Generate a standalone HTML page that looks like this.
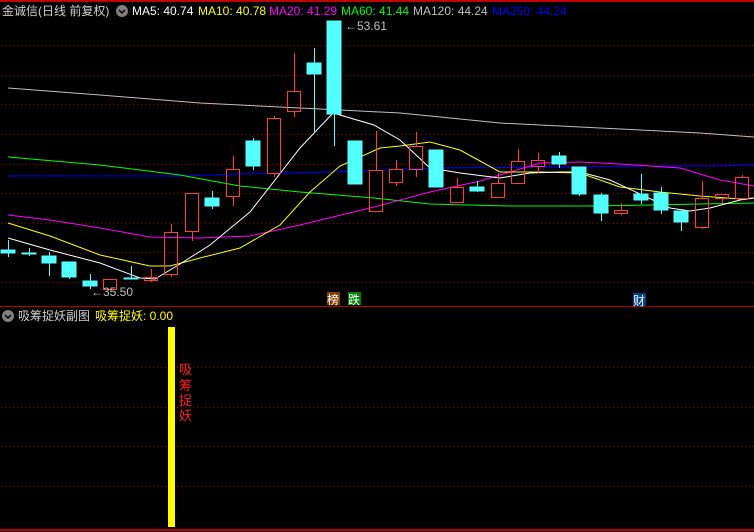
<!DOCTYPE html>
<html><head><meta charset="utf-8"><style>
html,body{margin:0;padding:0;background:#000;width:754px;height:532px;overflow:hidden}
svg{display:block}
text{font-family:"Liberation Sans","Noto Sans CJK SC",sans-serif}
</style></head><body>
<svg width="754" height="532" viewBox="0 0 754 532" xmlns="http://www.w3.org/2000/svg">
<rect width="754" height="532" fill="#000"/>
<rect x="0" y="0" width="754" height="2" fill="#c00000"/>
<g stroke="#a00000" stroke-width="1" stroke-dasharray="1 3">
<line x1="1" y1="45.5" x2="754" y2="45.5"/><line x1="1" y1="75.5" x2="754" y2="75.5"/>
<line x1="1" y1="104.5" x2="754" y2="104.5"/><line x1="1" y1="134.5" x2="754" y2="134.5"/>
<line x1="1" y1="164.5" x2="754" y2="164.5"/><line x1="1" y1="193.5" x2="754" y2="193.5"/>
<line x1="1" y1="223.5" x2="754" y2="223.5"/><line x1="1" y1="252.5" x2="754" y2="252.5"/>
<line x1="1" y1="282.5" x2="754" y2="282.5"/>
<line x1="1" y1="367.5" x2="754" y2="367.5"/><line x1="1" y1="407.5" x2="754" y2="407.5"/>
<line x1="1" y1="446.5" x2="754" y2="446.5"/><line x1="1" y1="486.5" x2="754" y2="486.5"/>
</g>
<rect x="0" y="306" width="754" height="1" fill="#b00000"/>
<rect x="0" y="529" width="754" height="2" fill="#c00000"/>
<g fill="none" stroke-width="1">
<polyline stroke="#c0c0c0" points="8,88 100,95 200,103 300,108 400,113 500,123 600,128 700,133 754,137"/>
<polyline stroke="#0000ff" points="8,176 180,176 240,174 330,172 440,168 560,167 650,166 710,166 754,165"/>
<polyline stroke="#00ff00" points="8,157 100,165 180,175 240,186 300,192 374,198 430,204 510,206 590,206 650,205 700,204 754,203"/>
<polyline stroke="#ff00ff" points="8,215 50,220 100,228 150,237 200,238 250,236 300,225 374,207 430,192 480,181 540,163 580,162 620,164 680,168 720,180 754,186"/>
<polyline stroke="#ffff00" points="8,223 50,236 100,255 150,266 170,266 200,258 240,248 280,225 310,192 340,166 380,148 400,146 430,142 460,150 500,172 540,172 580,173 620,187 660,192 700,196 740,199 754,198"/>
<polyline stroke="#ffffff" points="8,238 50,250 100,263 140,278 155,279 180,264 210,245 250,212 300,148 333,113 374,125 400,140 430,168 460,173 500,178 530,173 560,172 580,172 610,180 640,194 670,208 690,211 710,208 740,200 754,198"/>
</g>
<g stroke="#54ffff" fill="#54ffff">
<line x1="8.5" y1="240" x2="8.5" y2="257"/><rect x="1" y="250" width="14" height="3"/>
<line x1="29.5" y1="248" x2="29.5" y2="256"/><rect x="22" y="253" width="14" height="1"/>
<line x1="49.5" y1="252" x2="49.5" y2="276"/><rect x="42" y="256" width="14" height="7"/>
<line x1="69.5" y1="262" x2="69.5" y2="279"/><rect x="62" y="262" width="14" height="15"/>
<line x1="90.5" y1="274" x2="90.5" y2="289"/><rect x="83" y="281" width="14" height="5"/>
<line x1="131.5" y1="266" x2="131.5" y2="279"/><rect x="124" y="278" width="14" height="1"/>
<line x1="212.5" y1="191" x2="212.5" y2="209"/><rect x="205" y="198" width="14" height="8"/>
<line x1="253.5" y1="138" x2="253.5" y2="170"/><rect x="246" y="141" width="14" height="25"/>
<line x1="314.5" y1="48" x2="314.5" y2="133"/><rect x="307" y="63" width="14" height="11"/>
<line x1="334.5" y1="21" x2="334.5" y2="146"/><rect x="327" y="21" width="14" height="93"/>
<rect x="348" y="141" width="14" height="43"/>
<rect x="429" y="150" width="14" height="37"/>
<line x1="477.5" y1="181" x2="477.5" y2="192"/><rect x="470" y="187" width="14" height="4"/>
<line x1="559.5" y1="152" x2="559.5" y2="168"/><rect x="552" y="156" width="14" height="8"/>
<line x1="579.5" y1="167" x2="579.5" y2="196"/><rect x="572" y="167" width="14" height="27"/>
<line x1="601.5" y1="193" x2="601.5" y2="221"/><rect x="594" y="195" width="14" height="18"/>
<line x1="641.5" y1="174" x2="641.5" y2="204"/><rect x="634" y="194" width="14" height="6"/>
<line x1="661.5" y1="187" x2="661.5" y2="214"/><rect x="654" y="193" width="14" height="17"/>
<line x1="681.5" y1="211" x2="681.5" y2="231"/><rect x="674" y="211" width="14" height="11"/>
</g>
<g stroke="#ff3c3c" fill="none" stroke-width="1">
<rect x="103.5" y="279.5" width="13" height="10"/>
<path d="M151.5 269V277.5M151.5 280V282"/><rect x="144.5" y="277.5" width="13" height="3"/>
<path d="M171.5 224V232M171.5 274V277"/><rect x="164.5" y="232.5" width="13" height="42"/>
<path d="M192.5 231V241"/><rect x="185.5" y="193.5" width="13" height="38"/>
<path d="M233.5 156V169M233.5 196V206"/><rect x="226.5" y="169.5" width="13" height="27"/>
<path d="M274.5 116V118M274.5 173V177"/><rect x="267.5" y="118.5" width="13" height="55"/>
<path d="M294.5 53V91M294.5 111V117"/><rect x="287.5" y="91.5" width="13" height="20"/>
<path d="M376.5 131V170"/><rect x="369.5" y="170.5" width="13" height="41"/>
<path d="M396.5 160V169M396.5 182V186"/><rect x="389.5" y="169.5" width="13" height="13"/>
<path d="M416.5 132V146M416.5 169V177"/><rect x="409.5" y="146.5" width="13" height="23"/>
<path d="M457.5 178V187"/><rect x="450.5" y="187.5" width="13" height="15"/>
<path d="M498.5 173V183"/><rect x="491.5" y="183.5" width="13" height="14"/>
<path d="M518.5 149V161"/><rect x="511.5" y="161.5" width="13" height="22"/>
<path d="M538.5 153V160M538.5 166V173"/><rect x="531.5" y="160.5" width="13" height="6"/>
<path d="M621.5 203V210M621.5 213V215"/><rect x="614.5" y="210.5" width="13" height="3"/>
<path d="M702.5 181V198M702.5 227V229"/><rect x="695.5" y="198.5" width="13" height="29"/>
<path d="M722.5 198V204"/><rect x="715.5" y="194.5" width="13" height="4"/>
<path d="M742.5 175V177"/><rect x="735.5" y="177.5" width="13" height="21"/>
</g>
<text x="2" y="15" font-size="12" fill="#d0d0d0">金诚信(日线 前复权)</text>
<circle cx="122" cy="11" r="6" fill="#808080"/><path d="M119 10l3 3 3-3" stroke="#000" stroke-width="1.5" fill="none"/>
<text x="132" y="15" font-size="12" fill="#fff">MA5: 40.74</text>
<text x="198" y="15" font-size="12" fill="#ffff00">MA10: 40.78</text>
<text x="269" y="15" font-size="12" fill="#ff00ff">MA20: 41.29</text>
<text x="341" y="15" font-size="12" fill="#00ff00">MA60: 41.44</text>
<text x="413" y="15" font-size="12" fill="#c0c0c0">MA120: 44.24</text>
<text x="492" y="15" font-size="12" fill="#0000ff">MA250: 44.24</text>
<text x="345" y="30" font-size="12" fill="#c0c0c0">←53.61</text>
<text x="91" y="296" font-size="12" fill="#c0c0c0">←35.50</text>
<rect x="327" y="292" width="13" height="13" fill="#804000"/><text x="327" y="304" font-size="12" fill="#fff">榜</text>
<rect x="348" y="292" width="13" height="13" fill="#008000"/><text x="348" y="304" font-size="12" fill="#fff">跌</text>
<rect x="633" y="293" width="13" height="13" fill="#004080"/><text x="633" y="305" font-size="12" fill="#fff">财</text>
<circle cx="8" cy="316" r="6" fill="#808080"/><path d="M5 315l3 3 3-3" stroke="#000" stroke-width="1.5" fill="none"/>
<text x="18" y="320" font-size="12" fill="#d0d0d0">吸筹捉妖副图</text>
<text x="95" y="320" font-size="12" fill="#ffff00">吸筹捉妖: 0.00</text>
<rect x="168" y="327" width="7" height="200" fill="#ffff00"/>
<g font-size="13" fill="#ff2020">
<text x="179" y="374">吸</text><text x="179" y="390">筹</text><text x="179" y="405">捉</text><text x="179" y="420">妖</text>
</g>
</svg>
</body></html>
